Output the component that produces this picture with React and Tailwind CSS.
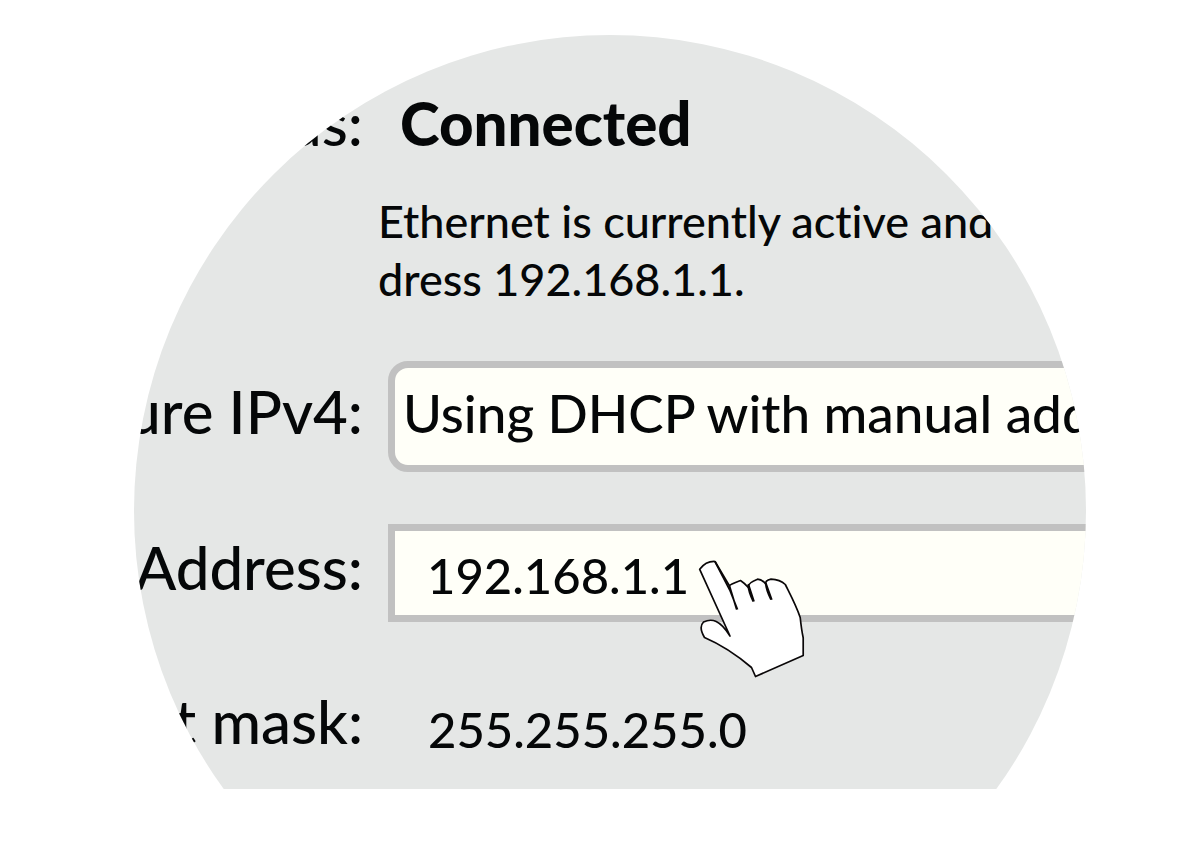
import React from "react";

function PointerHand() {
  return (
    <svg
      className="pointer-events-none absolute left-[308px] top-[32px] h-[126px] w-[112px]"
      viewBox="696 556 112 126"
      aria-hidden="true"
    >
      <path
        d="M730 636 L699.7 569.3 Q706 561 715 561.5 L729.5 586 Q729 584.7 740.5 580.5 Q745 583.5 748.3 587.5 Q747.5 583 757.5 579.2 Q762.5 579.5 766 584.5 Q764.5 580.5 771 579.2 Q780 579.5 785.3 584.5 C790 594 796 605 800.2 617.5 Q801.5 630 803.2 637.7 V655.5 L755.5 676.5 L751.5 667.5 C738 656 722 645 704.5 637.5 C700 630 700.5 625 703.5 622 C712 618 720 620 730 636 Z"
        fill="#fff"
        stroke="#0a0708"
        strokeWidth="1.7"
        strokeLinejoin="round"
      />
      <path
        d="M715 561.5 L729.8 590 L737.5 609.5 M729.5 586 L736.7 609.5 M748.3 584 L754 601.5 M748.3 586 Q748.6 592 753.3 601.5 M765.8 583 L771.8 599.7 M765.8 584 Q766.2 590 771 599.7"
        fill="none"
        stroke="#0a0708"
        strokeWidth="1.8"
      />
    </svg>
  );
}

export default function App() {
  const label =
    "justify-self-end whitespace-nowrap pb-3 text-right text-[60px] leading-[64px]";
  return (
    <main className="min-h-screen bg-white pl-[134px] pr-[105px] pt-[35px] font-['Lato','Noto_Sans',sans-serif] font-medium text-[#050708] [font-variant-ligatures:none]">
      <form className="w-full max-w-[952px] overflow-hidden bg-[#e5e7e6] pb-6 pt-14 [clip-path:circle(476px_at_50%_476px)]">
        <div className="grid grid-cols-[229px_1fr] gap-x-[25px]">
          <span className="justify-self-end whitespace-nowrap text-[60px] leading-[64px]">
            Status:
          </span>
          <strong className="pl-3 text-[60px] font-black leading-[64px]">
            Connected
          </strong>
        </div>
        <p className="ml-[244px] mt-[37px] whitespace-nowrap text-[45px] leading-[58px]">
          Ethernet is currently active and has the IP ad-
          <br />
          dress 192.168.1.1.
        </p>

        <div className="mt-[53px] grid grid-cols-[229px_1fr] items-center gap-x-[25px]">
          <label htmlFor="configure" className={label}>
            Configure IPv4:
          </label>
          <div className="min-w-0">
            <select
              id="configure"
              className="block h-[111px] w-[900px] appearance-none rounded-[20px] border-[7px] border-[#c1c1c1] bg-[#fffff8] pb-2 pl-2 text-[53px] outline-none"
            >
              <option>Using DHCP with manual address</option>
            </select>
          </div>
        </div>

        <div className="mt-[52px] grid grid-cols-[229px_1fr] items-center gap-x-[25px]">
          <label htmlFor="address" className={label}>
            IPv4 Address:
          </label>
          <div className="relative min-w-0">
            <input
              id="address"
              defaultValue="192.168.1.1"
              className="block h-[98px] w-[900px] border-[7px] border-[#c1c1c1] bg-[#fffff8] pl-8 pt-1 text-[49px] outline-none"
            />
            <PointerHand />
          </div>
        </div>

        <div className="mt-[67px] grid grid-cols-[229px_1fr] items-center gap-x-[25px]">
          <span className={label}>Subnet mask:</span>
          <span className="pl-10 pt-1 text-[49px] leading-[64px]">255.255.255.0</span>
        </div>
      </form>
    </main>
  );
}
